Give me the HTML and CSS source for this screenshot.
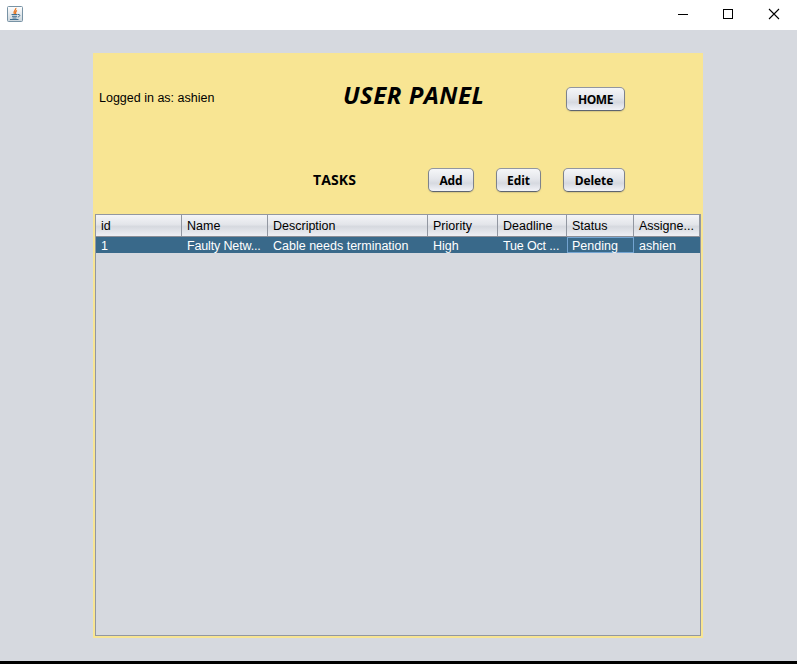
FILE: index.html
```html
<!DOCTYPE html>
<html lang="en">
<head>
<meta charset="utf-8">
<title>User Panel</title>
<link rel="stylesheet" href="styles.css">
</head>
<body>
<div class="window">
  <header class="titlebar">
    <svg class="app-icon" width="16" height="16" viewBox="0 0 16 16">
      <defs><linearGradient id="tile" x1="0" y1="0" x2="0" y2="1"><stop offset="0" stop-color="#fff"/><stop offset="1" stop-color="#cbd5dc"/></linearGradient></defs>
      <rect x=".5" y=".5" width="15" height="15" rx="1" fill="url(#tile)" stroke="#7893a5"/>
      <path d="M8.800 2C9.500 4 5.800 4.800 7.300 8M10 4.500C8 5.500 8.200 6.500 8.700 8" fill="none" stroke="#e87722" stroke-width="1.300"/>
      <path d="M4.500 8.500H10.500M5 10.300H10M5.500 12H9.500M3 13.500H11.500M11 8.500C13.500 8 13.500 10.500 10.800 11" fill="none" stroke="#416f90"/>
    </svg>
    <svg class="controls" width="104" height="14" viewBox="0 0 104 14" fill="none" stroke="#000">
      <path d="M1 7.500H11M46.500 2.500H55.500V11.500H46.500Z" shape-rendering="crispEdges"/>
      <path d="M92 2L102 12M102 2L92 12" stroke-width="1.100"/>
    </svg>
  </header>
  <main class="content">
    <section class="panel">
      <div class="top">
        <span class="login">Logged in as: ashien</span>
        <h1 class="heading">USER PANEL</h1>
        <button class="button home">HOME</button>
      </div>
      <div class="toolbar">
        <h2 class="subheading">TASKS</h2>
        <button class="button add">Add</button>
        <button class="button edit">Edit</button>
        <button class="button delete">Delete</button>
      </div>
      <div class="table">
        <div class="row head"><span>id</span><span>Name</span><span>Description</span><span>Priority</span><span>Deadline</span><span>Status</span><span class="clipped">Assigne...</span></div>
        <div class="row selected"><span>1</span><span class="tight">Faulty Netw...</span><span>Cable needs termination</span><span>High</span><span class="tight">Tue Oct ...</span><span class="focused">Pending</span><span>ashien</span></div>
      </div>
    </section>
  </main>
</div>
</body>
</html>
```
FILE: styles.css
```css
* { box-sizing: border-box; }
body { margin: 0; background: #d6d9df; font: 12.5px/16px "Liberation Sans", Arial, sans-serif; color: #000; }
.window { height: 664px; display: flex; flex-direction: column; border-bottom: 3px solid #000; }
.titlebar { height: 30px; flex: none; background: #fff; display: flex; justify-content: space-between; padding: 6px 16px 0 7px; }
.titlebar svg { display: block; }
.controls { margin-top: 1px; }
.content { padding: 23px 94px 0 93px; }
.panel { width: 610px; height: 585px; background: #f8e593; padding: 0 2px 2px; display: flex; flex-direction: column; }
.top { height: 92px; padding: 34px 0 0 4px; display: flex; align-items: flex-start; }
.login { width: 244px; padding-top: 3px; white-space: nowrap; }
.heading { width: 223px; margin: -7px 0 0; font: italic bold 24px/30px "Open Sans", sans-serif; letter-spacing: .5px; white-space: nowrap; }
.toolbar { height: 69px; padding: 23px 0 0 218px; display: flex; align-items: flex-start; }
.subheading { width: 115px; margin: 2px 0 0; font: bold 14px/20px "Open Sans", sans-serif; letter-spacing: .1px; }
.button { height: 24px; padding: 1px 0 0; border: 1px solid #7d828c; border-top-color: #9296a0; border-bottom-color: #5e646f; border-radius: 5px; background: linear-gradient(#f5f6f8, #e4e6eb 45%, #d6d9e0 65%, #f2f3f8); box-shadow: 0 1px 1px #b8ac7a80; font: bold 12px/20px "Open Sans", sans-serif; letter-spacing: -.1px; color: #000; }
.home { width: 59px; letter-spacing: -.4px; }
.add { width: 46px; }
.edit { width: 45px; margin: 0 22px; }
.delete { width: 62px; }
.table { width: 606px; height: 422px; border: 1px solid #9297a1; background: #d6d9df; }
.row { display: grid; grid-template-columns: 86px 86px 160px 70px 69px 67px 66px; }
.row span { padding-left: 5px; white-space: nowrap; }
.head { height: 22px; line-height: 22px; background: linear-gradient(#f4f5f8, #e3e5ea 45%, #d6d9df 55%, #eeeff4); border-bottom: 1px solid #8b8e96; }
.head span { border-right: 1px solid #9297a1; height: 21px; }
.selected { height: 16px; background: #39698a; color: #fff; line-height: 18px; }
.selected span { height: 16px; }
.selected .focused { border: 1px solid #73a4d1; padding-left: 4px; line-height: 16px; }
.selected .tight { letter-spacing: -.15px; }
```
